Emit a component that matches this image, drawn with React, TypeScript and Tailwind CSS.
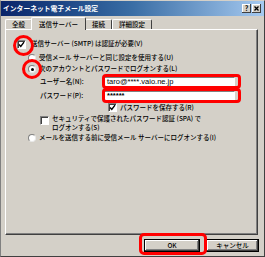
import React from "react";

function CheckBox({ checked }: { checked?: boolean }) {
  return (
    <div className="w-[9px] h-[9px] bg-white border border-t-[#808080] border-l-[#808080] border-r-[#fff] border-b-[#fff] shadow-[inset_1px_1px_#404040] flex items-center justify-center shrink-0">
      {checked && (
        <svg width="7" height="7" viewBox="0 0 7 7">
          <path d="M1 3.5 L2.8 5.5 L6 1.2" stroke="#000" strokeWidth="1.4" fill="none" />
        </svg>
      )}
    </div>
  );
}

function Radio({ checked }: { checked?: boolean }) {
  return (
    <div className="w-[8px] h-[8px] rounded-full bg-white border border-t-[#808080] border-l-[#808080] border-r-[#e8e8e8] border-b-[#e8e8e8] flex items-center justify-center shrink-0">
      {checked && <div className="w-[3px] h-[3px] rounded-full bg-black" />}
    </div>
  );
}

function Tab({ label, active }: { label: string; active?: boolean }) {
  return (
    <div
      className={
        active
          ? "h-[13px] px-[7px] -mx-[1px] relative z-10 bg-[#d4d0c8] border-t border-l border-t-white border-l-white border-r border-r-[#404040] rounded-t-[2px] flex items-center mb-[-1px]"
          : "h-[10px] px-[6px] bg-[#d4d0c8] border-t border-l border-t-white border-l-white border-r border-r-[#404040] rounded-t-[2px] flex items-center"
      }
    >
      <span className="leading-none">{label}</span>
    </div>
  );
}

function Button({ label, w }: { label: string; w: string }) {
  return (
    <div
      className={`${w} h-[13px] bg-[#d4d0c8] flex items-center justify-center shadow-[inset_-1px_-1px_#404040,inset_1px_1px_#fff,inset_-2px_-2px_#808080] border border-black`}
    >
      <span className="leading-none">{label}</span>
    </div>
  );
}

export default function App() {
  return (
    <div
      className="w-[265px] h-[257px] bg-[#d4d0c8] relative overflow-hidden flex flex-col text-[6.5px] font-medium text-black border-l border-t border-r border-b border-l-[#808080] border-t-[#d4d0c8] border-r-[#404040] border-b-[#404040]"
      style={{ fontFamily: '"Noto Sans CJK JP", "Noto Sans", sans-serif' }}
    >
      {/* title bar */}
      <div className="h-[15px] bg-gradient-to-r from-[#0a246a] via-[#3a6ea5] to-[#a6caf0] flex items-center justify-between pl-[2px] pr-[3px]">
        <span className="text-white font-bold text-[6.8px] leading-none">インターネット電子メール設定</span>
        <div className="flex gap-[1px]">
          <div className="w-[9px] h-[9px] bg-[#d4d0c8] shadow-[inset_-1px_-1px_#404040,inset_1px_1px_#fff] flex items-center justify-center text-[7px] font-bold leading-none">?</div>
          <div className="w-[9px] h-[9px] bg-[#d4d0c8] shadow-[inset_-1px_-1px_#404040,inset_1px_1px_#fff] flex items-center justify-center">
            <svg width="5" height="5" viewBox="0 0 5 5">
              <path d="M0.5 0.5 L4.5 4.5 M4.5 0.5 L0.5 4.5" stroke="#000" strokeWidth="1.3" />
            </svg>
          </div>
        </div>
      </div>

      {/* tabs */}
      <div className="flex items-end ml-[4px] mt-[1px] h-[12px]">
        <Tab label="全般" />
        <Tab label="送信サーバー" active />
        <Tab label="接続" />
        <Tab label="詳細設定" />
      </div>

      {/* panel */}
      <div className="ml-[4px] w-[253px] h-[206px] border-t border-l border-t-white border-l-white border-r border-b border-r-[#404040] border-b-[#404040] shadow-[inset_-1px_-1px_#808080] relative">
        <div className="flex items-center gap-[5px] ml-[11px] mt-[9px] h-[10px]">
          <CheckBox checked />
          <span>送信サーバー (SMTP) は認証が必要(V)</span>
        </div>
        <div className="flex items-center gap-[3px] ml-[22px] mt-[4px] h-[10px]">
          <Radio />
          <span>受信メール サーバーと同じ設定を使用する(U)</span>
        </div>
        <div className="flex items-center gap-[3px] ml-[22px] mt-[1px] h-[10px]">
          <Radio checked />
          <span>次のアカウントとパスワードでログオンする(L)</span>
        </div>
        <div className="flex items-center ml-[34px] mt-[2px] h-[12px]">
          <span className="w-[64px]">ユーザー名(N):</span>
          <div className="w-[131px] h-[11px] bg-white border border-t-[#808080] border-l-[#808080] border-r-white border-b-white flex items-center px-[2px]">
            <span className="text-[7.5px] font-normal leading-none" style={{ fontFamily: '"Liberation Sans", sans-serif' }}>taro@****.vaio.ne.jp</span>
          </div>
        </div>
        <div className="flex items-center ml-[34px] mt-[2px] h-[11px]">
          <span className="w-[64px]">パスワード(P):</span>
          <div className="w-[131px] h-[10px] bg-white border border-t-[#808080] border-l-[#808080] border-r-white border-b-white flex items-center px-[2px]">
            <span className="text-[7.5px] font-bold leading-none" style={{ fontFamily: '"Liberation Sans", sans-serif' }}>******</span>
          </div>
        </div>
        <div className="flex items-center gap-[3px] ml-[102px] mt-[1px] h-[11px]">
          <CheckBox checked />
          <span>パスワードを保存する(R)</span>
        </div>
        <div className="flex items-start gap-[3px] ml-[34px] mt-[1px]">
          <div className="mt-[2px]">
            <CheckBox />
          </div>
          <span className="leading-[9px]">
            セキュリティで保護されたパスワード認証 (SPA) で
            <br />
            ログオンする(S)
          </span>
        </div>
        <div className="flex items-center gap-[3px] ml-[22px] mt-[1px] h-[10px]">
          <Radio />
          <span>メールを送信する前に受信メール サーバーにログオンする(I)</span>
        </div>
      </div>

      {/* buttons */}
      <div className="flex justify-end gap-[6px] mt-[4px] mr-[5px]">
        <Button label="OK" w="w-[56px]" />
        <Button label="キャンセル" w="w-[53px]" />
      </div>

      {/* red annotation marks */}
      <div className="absolute left-[12px] top-[34px] w-[21px] h-[21px] rounded-full border-[3px] border-[#f00]" />
      <div className="absolute left-[21px] top-[58px] w-[20px] h-[20px] rounded-full border-[3px] border-[#f00]" />
      <div className="absolute left-[101px] top-[73px] w-[139px] h-[15px] rounded-[4px] border-[3px] border-[#f00]" />
      <div className="absolute left-[101px] top-[87px] w-[139px] h-[15px] rounded-[4px] border-[3px] border-[#f00]" />
      <div className="absolute left-[138px] top-[232px] w-[68px] h-[22px] rounded-[5px] border-[3px] border-[#f00]" />
    </div>
  );
}
